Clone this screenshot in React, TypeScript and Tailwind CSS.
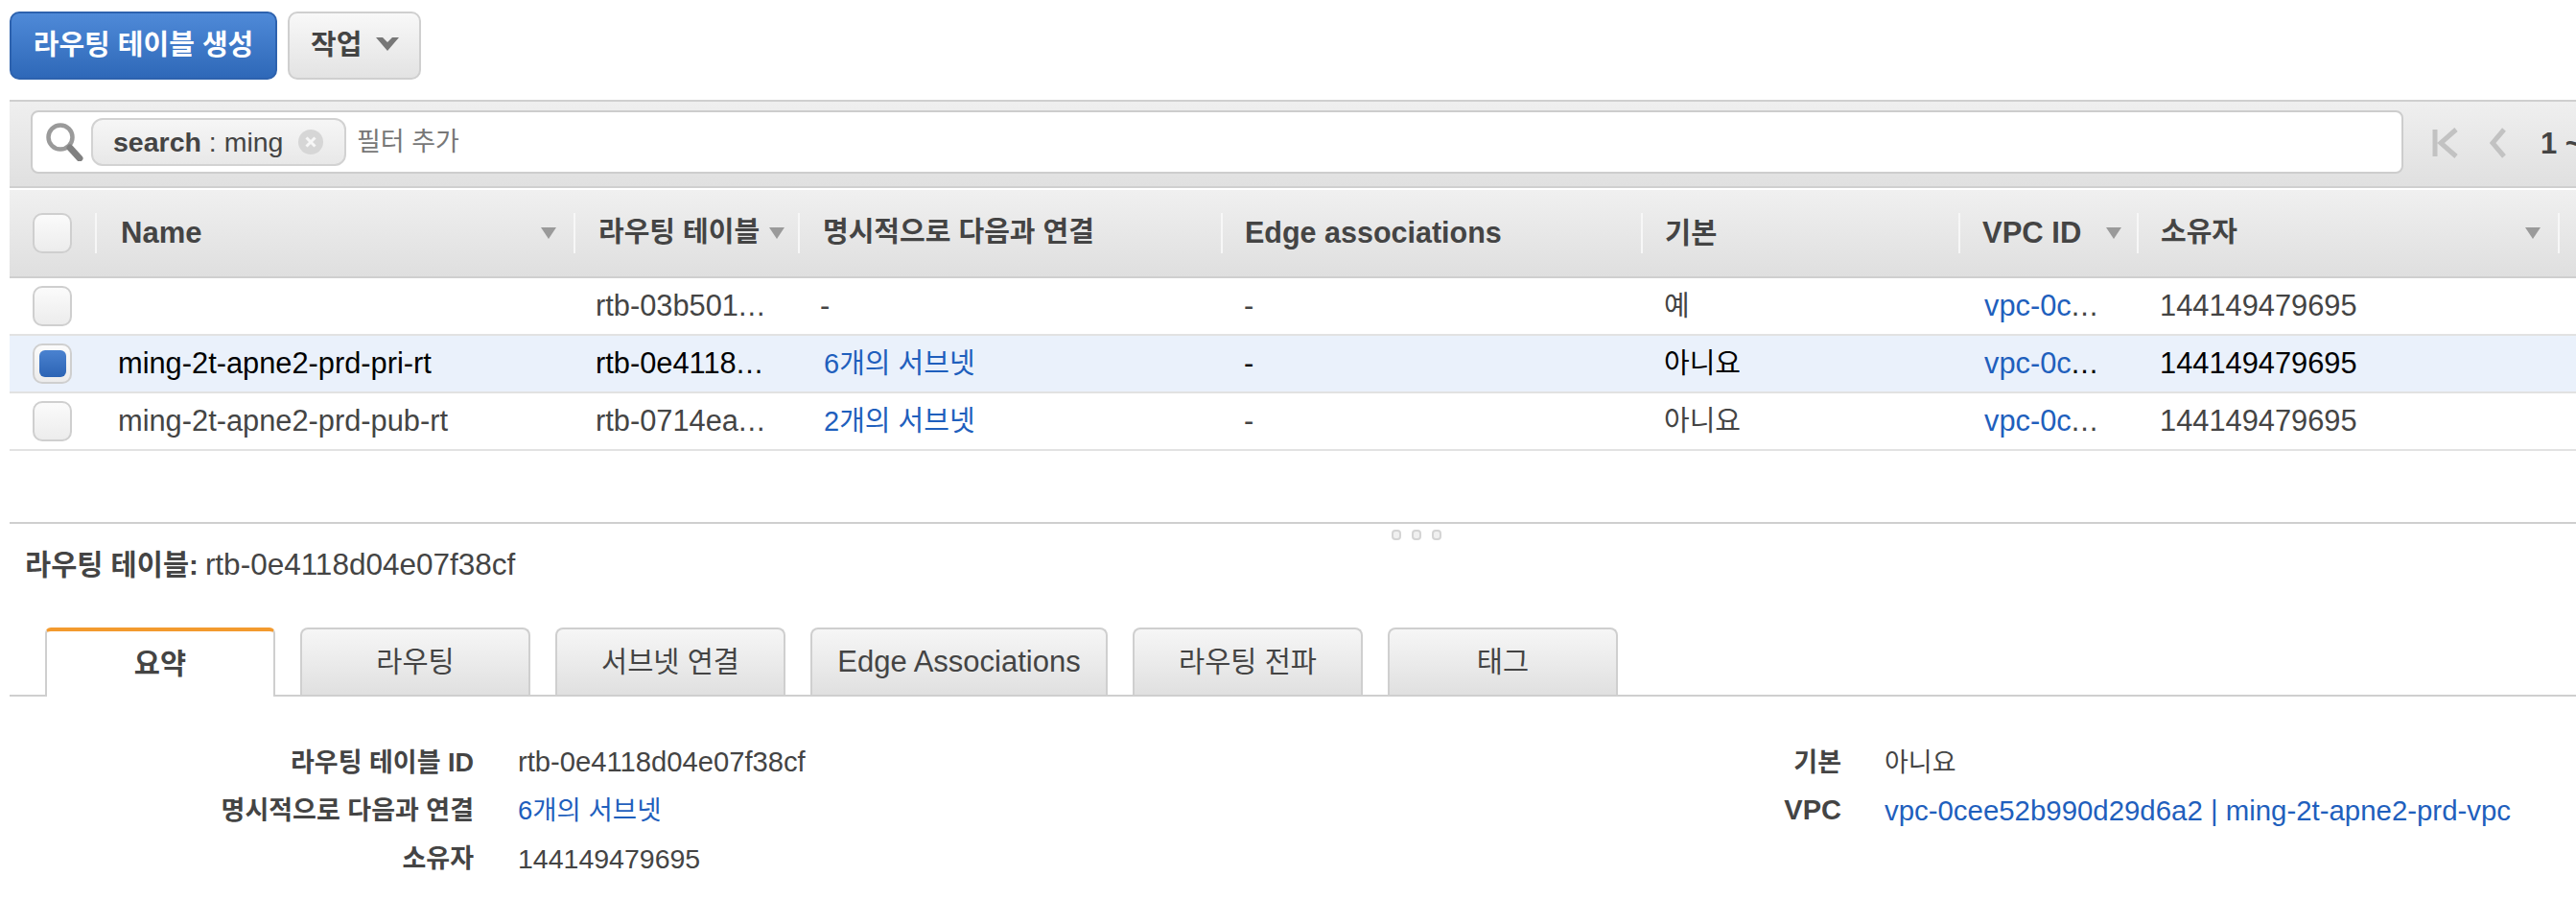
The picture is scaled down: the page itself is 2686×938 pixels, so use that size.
import React from "react";

const font = "font-['Liberation_Sans','Noto_Sans_CJK_KR',sans-serif]";
const gridCols =
  "grid grid-cols-[89px_499px_234px_441px_438px_331px_186px_439px_1fr]";

const columns = [
  { label: "Name", sort: true, cls: "pl-[25px] pr-[18px] text-[31px]" },
  { label: "라우팅 테이블", sort: true, cls: "pl-[24px] pr-[14px] text-[29px]" },
  { label: "명시적으로 다음과 연결", sort: false, cls: "pl-[24px] text-[29px]" },
  { label: "Edge associations", sort: false, cls: "pl-[23px] text-[30.5px]" },
  { label: "기본", sort: false, cls: "pl-[23px] text-[29.5px]" },
  { label: "VPC ID", sort: true, cls: "pl-[23px] pr-[16px] text-[31px]" },
  { label: "소유자", sort: true, cls: "pl-[23px] pr-[18px] text-[29px]" },
];

const rows = [
  { name: "", id: "rtb-03b501", subnets: "-", main: "예", selected: false },
  {
    name: "ming-2t-apne2-prd-pri-rt",
    id: "rtb-0e4118",
    subnets: "6개의 서브넷",
    main: "아니요",
    selected: true,
  },
  {
    name: "ming-2t-apne2-prd-pub-rt",
    id: "rtb-0714ea",
    subnets: "2개의 서브넷",
    main: "아니요",
    selected: false,
  },
];

const tabs = ["요약", "라우팅", "서브넷 연결", "Edge Associations", "라우팅 전파", "태그"];

function Caret() {
  return (
    <svg width="16" height="14" viewBox="0 0 16 14" className="shrink-0">
      <path d="M0 1h16L8 13z" fill="#9a9a9a" />
    </svg>
  );
}

function Checkbox({ checked = false }: { checked?: boolean }) {
  return (
    <div className="w-[41px] h-[42px] rounded-[10px] border-2 border-[#cfcfcf] bg-gradient-to-b from-[#fbfbfb] to-[#ececec] flex items-center justify-center">
      {checked && (
        <div className="w-[28px] h-[28px] rounded-[6px] bg-gradient-to-b from-[#4a82d0] to-[#2c64b4]" />
      )}
    </div>
  );
}

function Detail({ label, children }: { label: string; children: React.ReactNode }) {
  return (
    <div className="flex items-center h-[50px]">
      <div className="w-[484px] text-right font-bold text-[27px] text-[#444]">{label}</div>
      <div className="ml-[46px]">{children}</div>
    </div>
  );
}

export default function App() {
  return (
    <div className={`${font} w-[2686px] h-[938px] overflow-hidden bg-white pl-[10px] text-[#444]`}>
      <div className="flex gap-[11px] pt-[12px] h-[104px]">
        <button className="w-[279px] h-[71px] rounded-[10px] border-2 border-[#2d62ae] bg-gradient-to-b from-[#4f8ad8] to-[#2e68b8] text-white font-bold text-[29px]">
          라우팅 테이블 생성
        </button>
        <button className="w-[139px] h-[71px] rounded-[10px] border-2 border-[#cfcfcf] bg-gradient-to-b from-[#f8f8f8] to-[#e3e3e3] font-bold text-[29px] flex items-center pl-[22px] gap-[15px]">
          작업
          <svg width="24" height="15" viewBox="0 0 24 15" className="-mt-[4px] blur-[0.4px]">
            <path d="M0 1h7l5 5 5-5h7L12 15z" fill="#777" />
          </svg>
        </button>
      </div>

      <div className="h-[92px] border-y-2 border-[#cfcfcf] bg-gradient-to-b from-[#efefef] to-[#e0e0e0] flex items-center pl-[22px] overflow-hidden">
        <div className="w-[2474px] h-[66px] self-start mt-[9px] shrink-0 rounded-[8px] border-2 border-[#cdcdcd] bg-white flex items-center pl-[13px]">
          <svg width="40" height="40" viewBox="0 0 40 40" className="shrink-0 blur-[0.5px]">
            <circle cx="16" cy="15" r="12.5" fill="none" stroke="#9a9a9a" strokeWidth="4.5" />
            <path d="M26 26l10 11" stroke="#808080" strokeWidth="7" strokeLinecap="round" />
          </svg>
          <div className="ml-[8px] w-[266px] h-[50px] rounded-[12px] border-2 border-[#d2d2d2] bg-gradient-to-b from-[#f6f6f6] to-[#e8e8e8] flex items-center pl-[21px] text-[28.5px] shrink-0">
            <b>search</b>
            <span className="whitespace-pre"> : ming</span>
            <svg width="26" height="26" viewBox="0 0 26 26" className="ml-[16px]">
              <circle cx="13" cy="13" r="13" fill="#d6d6d6" />
              <path d="M8.5 8.5l9 9M17.5 8.5l-9 9" stroke="#f7f7f7" strokeWidth="3" />
            </svg>
          </div>
          <span className="ml-[11px] text-[27px] text-[#777]">필터 추가</span>
        </div>
        <svg width="28" height="32" viewBox="0 0 28 32" className="ml-[30px] -mt-[2px] shrink-0 blur-[0.4px]">
          <path d="M3 2v28M25 2L9 16l16 14" fill="none" stroke="#c2c2c2" strokeWidth="5" />
        </svg>
        <svg width="18" height="32" viewBox="0 0 18 32" className="ml-[32px] -mt-[2px] shrink-0 blur-[0.4px]">
          <path d="M15 2L3 16l12 14" fill="none" stroke="#c2c2c2" strokeWidth="5" />
        </svg>
        <span className="ml-[35px] text-[31px] font-bold whitespace-nowrap">1 ~ 3</span>
      </div>

      <div className={`${gridCols} h-[94px] border-b-2 border-[#cfcfcf] bg-gradient-to-b from-[#f0f0f0] to-[#dfdfdf] border-t-2 border-t-white items-center font-bold`}>
        <div className="pl-[24px]">
          <Checkbox />
        </div>
        {columns.map((col) => (
          <div
            key={col.label}
            className={`h-[42px] flex items-center justify-between border-l-2 border-[#f7f7f7] whitespace-nowrap ${col.cls}`}
          >
            <span>{col.label}</span>
            {col.sort && <Caret />}
          </div>
        ))}
        <div className="h-[42px] border-l-2 border-[#f7f7f7]" />
      </div>

      {rows.map((row) => (
        <div
          key={row.id}
          className={`${gridCols} h-[60px] border-b-2 border-[#e2e2e2] items-center text-[30.8px] whitespace-nowrap ${
            row.selected ? "bg-[#eaf1fb] text-black" : "text-[#444]"
          }`}
        >
          <div className="pl-[24px]">
            <Checkbox checked={row.selected} />
          </div>
          <div className="pl-[24px]">{row.name}</div>
          <div className="pl-[23px]">
            {row.id}
            <span className="tracking-[1px]">...</span>
          </div>
          <div className={row.subnets === "-" ? "pl-[23px]" : "pl-[27px] pt-[2px] text-[29px] text-[#1f5fbd]"}>{row.subnets}</div>
          <div className="pl-[24px]">-</div>
          <div className="pl-[24px] pt-[2px] text-[29px]">{row.main}</div>
          <div className="pl-[27px] text-[#1f5fbd]">
            vpc-0c<span className={`tracking-[1px] ${row.selected ? "text-black" : "text-[#444]"}`}>...</span>
          </div>
          <div className="pl-[24px]">144149479695</div>
          <div />
        </div>
      ))}

      <div className="mt-[74px] border-t-2 border-[#cfcfcf] h-[20px] flex gap-[11px] pt-[6px] pl-[1441px]">
        <div className="w-[10px] h-[11px] rounded-[4px] border-2 border-[#d4d4d4] bg-[#f0f0f0]" />
        <div className="w-[10px] h-[11px] rounded-[4px] border-2 border-[#d4d4d4] bg-[#f0f0f0]" />
        <div className="w-[10px] h-[11px] rounded-[4px] border-2 border-[#d4d4d4] bg-[#f0f0f0]" />
      </div>

      <div className="pl-[16px] h-[48px] flex items-center mt-[1px]">
        <b className="text-[29.5px]">라우팅 테이블:</b>
        <span className="ml-[7px] text-[31.5px]">rtb-0e4118d04e07f38cf</span>
      </div>

      <div className="mt-[41px] h-[72px] border-b-2 border-[#cfcfcf] flex items-end pl-[37px] gap-[26px] text-[29.5px]">
        {tabs.map((tab, i) => (
          <div
            key={tab}
            className={
              i === 0
                ? "w-[240px] h-[72px] -mb-[2px] rounded-t-[6px] border-x-2 border-[#cfcfcf] border-t-4 border-t-[#f39a2e] bg-white flex items-center justify-center font-bold"
                : tab.startsWith("Edge")
                  ? "w-[310px] h-[70px] rounded-t-[8px] border-x-2 border-t-2 border-[#cfcfcf] bg-gradient-to-b from-[#f6f6f6] to-[#e0e0e0] flex items-center justify-center text-[31px]"
                  : "w-[240px] h-[70px] rounded-t-[8px] border-x-2 border-t-2 border-[#cfcfcf] bg-gradient-to-b from-[#f6f6f6] to-[#e0e0e0] flex items-center justify-center"
            }
          >
            {tab}
          </div>
        ))}
      </div>

      <div className="flex pt-[44px] text-[28px]">
        <div className="w-[1450px]">
          <Detail label="라우팅 테이블 ID">
            <span className="text-[29.2px]">rtb-0e4118d04e07f38cf</span>
          </Detail>
          <Detail label="명시적으로 다음과 연결">
            <span className="text-[27.5px] text-[#1f5fbd]">6개의 서브넷</span>
          </Detail>
          <Detail label="소유자">
            <span className="text-[28.5px]">144149479695</span>
          </Detail>
        </div>
        <div>
          <div className="flex items-center h-[50px]">
            <div className="w-[460px] text-right font-bold text-[27px]">기본</div>
            <div className="ml-[45px] text-[27px]">아니요</div>
          </div>
          <div className="flex items-center h-[50px]">
            <div className="w-[460px] text-right font-bold text-[29px]">VPC</div>
            <div className="ml-[45px] text-[29.4px] text-[#1f5fbd]">vpc-0cee52b990d29d6a2 | ming-2t-apne2-prd-vpc</div>
          </div>
        </div>
      </div>
    </div>
  );
}
